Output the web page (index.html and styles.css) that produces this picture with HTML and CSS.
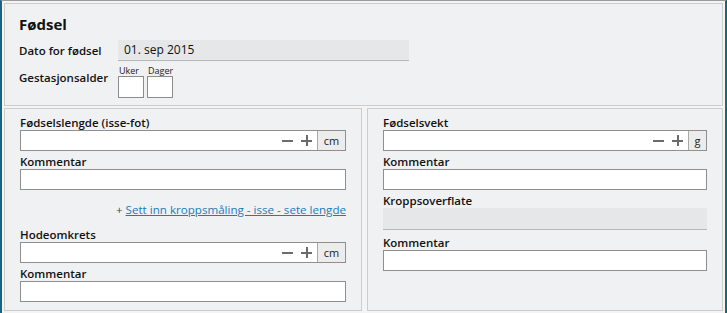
FILE: index.html
```html
<!DOCTYPE html>
<html lang="no">
<head>
<meta charset="utf-8">
<link rel="stylesheet" href="styles.css">
</head>
<body>
<div class="frame">
  <section class="panel top">
    <h1 class="title">Fødsel</h1>
    <div class="row">
      <div class="rlabel">Dato for fødsel</div>
      <div class="readonly date">01. sep 2015</div>
    </div>
    <div class="row gest">
      <div class="rlabel">Gestasjonsalder</div>
      <div class="smallboxes">
        <div class="sb"><span class="sblabel">Uker</span><div class="box"></div></div>
        <div class="sb"><span class="sblabel">Dager</span><div class="box"></div></div>
      </div>
    </div>
  </section>
  <div class="bottom">
    <section class="panel col">
      <div class="group">
        <div class="label">Fødselslengde (isse-fot)</div>
        <div class="input num">
          <span class="spin"><span class="minus"></span><span class="plus"></span></span>
          <span class="unit">cm</span>
        </div>
      </div>
      <div class="group">
        <div class="label">Kommentar</div>
        <div class="input"></div>
      </div>
      <div class="linkrow"><span class="plusglyph">+</span> <a class="link" href="#">Sett inn kroppsmåling - isse - sete lengde</a></div>
      <div class="group">
        <div class="label">Hodeomkrets</div>
        <div class="input num">
          <span class="spin"><span class="minus"></span><span class="plus"></span></span>
          <span class="unit">cm</span>
        </div>
      </div>
      <div class="group">
        <div class="label">Kommentar</div>
        <div class="input"></div>
      </div>
    </section>
    <section class="panel col">
      <div class="group">
        <div class="label">Fødselsvekt</div>
        <div class="input num">
          <span class="spin"><span class="minus"></span><span class="plus"></span></span>
          <span class="unit g">g</span>
        </div>
      </div>
      <div class="group">
        <div class="label">Kommentar</div>
        <div class="input"></div>
      </div>
      <div class="group spaced">
        <div class="label">Kroppsoverflate</div>
        <div class="readonly area"></div>
      </div>
      <div class="group">
        <div class="label">Kommentar</div>
        <div class="input"></div>
      </div>
    </section>
  </div>
</div>
</body>
</html>
```

FILE: styles.css
```css
* { box-sizing: border-box; }
html, body { margin: 0; padding: 0; }
body {
  width: 727px;
  height: 313px;
  background: #f4f4f5;
  font-family: "Open Sans", "Noto Sans", sans-serif;
  color: #111;
  overflow: hidden;
}
.frame {
  height: 313px;
  border-left: 2px solid #1b6481;
  border-right: 2px solid #1b6481;
  border-top: 1px solid #9a9a9a;
  padding: 2px 2px 0 2px;
  display: flex;
  flex-direction: column;
  gap: 2px;
}
.panel {
  background: #f0f1f3;
  border: 1px solid #cdcdcd;
}
.top {
  height: 103px;
  padding: 10px 0 0 14px;
}
.title {
  margin: 0;
  font-size: 15px;
  font-weight: 700;
  line-height: 20px;
}
.row {
  display: flex;
  align-items: center;
  margin-top: 6px;
}
.rlabel {
  width: 99px;
  font-size: 11.5px;
  font-weight: 600;
}
.readonly {
  background: #e5e7e9;
  border-bottom: 1px solid #b4b6b8;
}
.date {
  width: 291px;
  height: 21px;
  font-size: 12px;
  line-height: 20px;
  padding-left: 6px;
}
.gest { margin-top: 4px; align-items: flex-end; }
.gest .rlabel { padding-bottom: 13px; }
.smallboxes { display: flex; gap: 3px; }
.sb { display: flex; flex-direction: column; }
.sblabel {
  font-size: 9px;
  line-height: 11px;
  padding-left: 1px;
  color: #222;
}
.box {
  width: 26px;
  height: 22px;
  background: #fff;
  border: 1px solid #8c8c8c;
}
.bottom {
  display: grid;
  grid-template-columns: 358px 1fr;
  gap: 5px;
  height: 203px;
}
.col {
  padding: 6px 15px 0 15px;
  display: flex;
  flex-direction: column;
  gap: 3px;
}
.label {
  font-size: 11.5px;
  font-weight: 600;
  line-height: 15px;
  height: 15px;
}
.input {
  height: 21px;
  background: #fff;
  border: 1px solid #8f8f8f;
}
.num {
  display: flex;
  justify-content: flex-end;
  align-items: stretch;
}
.spin {
  display: flex;
  align-items: center;
  gap: 8px;
  padding-right: 5px;
}
.minus, .plus {
  position: relative;
  width: 11px;
  height: 11px;
}
.minus::before, .plus::before, .plus::after {
  content: "";
  position: absolute;
  background: #6b6b6b;
}
.minus::before, .plus::before {
  left: 0; right: 0; top: 5px; height: 2px;
}
.plus::after {
  top: 0; bottom: 0; left: 4.5px; width: 2px;
}
.unit {
  width: 28px;
  background: #ececec;
  border-left: 1px solid #a8a8a8;
  font-size: 11px;
  line-height: 19px;
  text-align: center;
  color: #222;
}
.unit.g { width: 18px; }
.area { height: 22px; }
.spaced { margin-bottom: 2px; }
.linkrow {
  text-align: right;
  font-size: 11.6px;
  line-height: 16px;
  margin: 9px 0 6px;
  color: #2a7fb3;
}
.plusglyph { color: #444; }
.link {
  color: #1c7cb5;
  text-decoration: underline;
}
```
